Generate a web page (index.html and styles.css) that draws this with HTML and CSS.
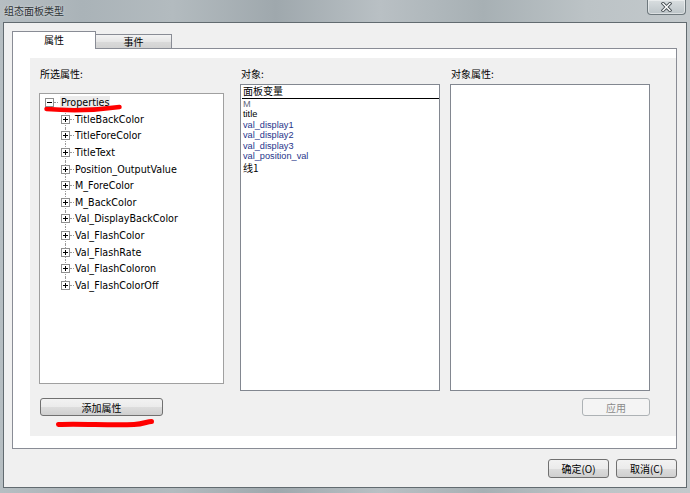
FILE: index.html
```html
<!DOCTYPE html>
<html>
<head>
<meta charset="utf-8">
<link rel="stylesheet" href="styles.css">
</head>
<body>
<div class="window">
  <div class="titlebar">
    <span class="title">组态面板类型</span>
    <div class="close">
      <svg width="11" height="10" viewBox="0 0 11 10">
        <path d="M2 1.5 L9 8.5 M9 1.5 L2 8.5" stroke="#4a5257" stroke-width="3.2" stroke-linecap="square" fill="none"/>
        <path d="M2 1.5 L9 8.5 M9 1.5 L2 8.5" stroke="#ffffff" stroke-width="1.4" stroke-linecap="square" fill="none"/>
      </svg>
    </div>
  </div>
  <div class="client">
    <div class="tabs">
      <div class="tab active">属性</div>
      <div class="tab">事件</div>
    </div>
    <div class="page">
      <div class="content">
        <div class="col col-props">
          <div class="label">所选属性:</div>
          <div class="tree">
            <div class="node root">
              <svg class="exp" width="9" height="9" viewBox="0 0 9 9"><rect x="0.5" y="0.5" width="8" height="8" fill="#fff" stroke="#8f8f8f"/><path d="M2 4.5 H7" stroke="#000"/></svg>
              <span class="conn"></span><span class="ntext sel">Properties</span>
            </div>
            <div class="children">
              <div class="node child"><svg class="exp" width="9" height="9" viewBox="0 0 9 9"><rect x="0.5" y="0.5" width="8" height="8" fill="#fff" stroke="#8f8f8f"/><path d="M2 4.5 H7 M4.5 2 V7" stroke="#000"/></svg><span class="conn"></span><span class="ntext">TitleBackColor</span></div>
              <div class="node child"><svg class="exp" width="9" height="9" viewBox="0 0 9 9"><rect x="0.5" y="0.5" width="8" height="8" fill="#fff" stroke="#8f8f8f"/><path d="M2 4.5 H7 M4.5 2 V7" stroke="#000"/></svg><span class="conn"></span><span class="ntext">TitleForeColor</span></div>
              <div class="node child"><svg class="exp" width="9" height="9" viewBox="0 0 9 9"><rect x="0.5" y="0.5" width="8" height="8" fill="#fff" stroke="#8f8f8f"/><path d="M2 4.5 H7 M4.5 2 V7" stroke="#000"/></svg><span class="conn"></span><span class="ntext">TitleText</span></div>
              <div class="node child"><svg class="exp" width="9" height="9" viewBox="0 0 9 9"><rect x="0.5" y="0.5" width="8" height="8" fill="#fff" stroke="#8f8f8f"/><path d="M2 4.5 H7 M4.5 2 V7" stroke="#000"/></svg><span class="conn"></span><span class="ntext">Position_OutputValue</span></div>
              <div class="node child"><svg class="exp" width="9" height="9" viewBox="0 0 9 9"><rect x="0.5" y="0.5" width="8" height="8" fill="#fff" stroke="#8f8f8f"/><path d="M2 4.5 H7 M4.5 2 V7" stroke="#000"/></svg><span class="conn"></span><span class="ntext">M_ForeColor</span></div>
              <div class="node child"><svg class="exp" width="9" height="9" viewBox="0 0 9 9"><rect x="0.5" y="0.5" width="8" height="8" fill="#fff" stroke="#8f8f8f"/><path d="M2 4.5 H7 M4.5 2 V7" stroke="#000"/></svg><span class="conn"></span><span class="ntext">M_BackColor</span></div>
              <div class="node child"><svg class="exp" width="9" height="9" viewBox="0 0 9 9"><rect x="0.5" y="0.5" width="8" height="8" fill="#fff" stroke="#8f8f8f"/><path d="M2 4.5 H7 M4.5 2 V7" stroke="#000"/></svg><span class="conn"></span><span class="ntext">Val_DisplayBackColor</span></div>
              <div class="node child"><svg class="exp" width="9" height="9" viewBox="0 0 9 9"><rect x="0.5" y="0.5" width="8" height="8" fill="#fff" stroke="#8f8f8f"/><path d="M2 4.5 H7 M4.5 2 V7" stroke="#000"/></svg><span class="conn"></span><span class="ntext">Val_FlashColor</span></div>
              <div class="node child"><svg class="exp" width="9" height="9" viewBox="0 0 9 9"><rect x="0.5" y="0.5" width="8" height="8" fill="#fff" stroke="#8f8f8f"/><path d="M2 4.5 H7 M4.5 2 V7" stroke="#000"/></svg><span class="conn"></span><span class="ntext">Val_FlashRate</span></div>
              <div class="node child"><svg class="exp" width="9" height="9" viewBox="0 0 9 9"><rect x="0.5" y="0.5" width="8" height="8" fill="#fff" stroke="#8f8f8f"/><path d="M2 4.5 H7 M4.5 2 V7" stroke="#000"/></svg><span class="conn"></span><span class="ntext">Val_FlashColoron</span></div>
              <div class="node child"><svg class="exp" width="9" height="9" viewBox="0 0 9 9"><rect x="0.5" y="0.5" width="8" height="8" fill="#fff" stroke="#8f8f8f"/><path d="M2 4.5 H7 M4.5 2 V7" stroke="#000"/></svg><span class="conn"></span><span class="ntext">Val_FlashColorOff</span></div>
            </div>
          </div>
          <button class="btn add">添加属性</button>
        </div>
        <div class="col col-obj">
          <div class="label">对象:</div>
          <div class="listbox">
            <div class="lhead">面板变量</div>
            <div class="item gray">M</div>
            <div class="item">title</div>
            <div class="item blue">val_display1</div>
            <div class="item blue">val_display2</div>
            <div class="item blue">val_display3</div>
            <div class="item blue">val_position_val</div>
            <div class="item cjk">线1</div>
          </div>
        </div>
        <div class="col col-attr">
          <div class="label">对象属性:</div>
          <div class="listbox"></div>
          <button class="btn apply">应用</button>
        </div>
      </div>
    </div>
    <div class="footer">
      <button class="btn foot">确定(O)</button>
      <button class="btn foot">取消(C)</button>
    </div>
  </div>
  <svg class="marks" width="690" height="493" viewBox="0 0 690 493">
    <path d="M46.5 109 C 65 110.5, 95 110.5, 119.5 107" stroke="#ff0000" stroke-width="4.5" stroke-linecap="round" fill="none"/>
    <path d="M58.5 424.5 C 80 423.5, 110 425.5, 134 424.5 C 144 424, 147 421.5, 151.5 421.5" stroke="#ff0000" stroke-width="5" stroke-linecap="round" fill="none"/>
  </svg>
</div>
</body>
</html>
```

FILE: styles.css
```css
* { box-sizing: border-box; }

body {
  margin: 0;
  width: 690px;
  height: 493px;
  overflow: hidden;
  font-family: "Liberation Sans", "Noto Sans CJK SC", sans-serif;
  background: #bfc6ca;
}

.window {
  position: relative;
  width: 690px;
  height: 493px;
  display: flex;
  flex-direction: column;
  background: linear-gradient(90deg, #b6bec2 0%, #aab3b8 12%, #b3bbbf 25%, #9fa8ad 40%, #b9c0c4 55%, #a7b0b4 70%, #bcc3c6 85%, #c3c9cc 100%);
}

.titlebar {
  height: 22px;
  flex: none;
  display: flex;
  align-items: flex-start;
}

.title {
  font-family: "Noto Sans CJK SC", sans-serif;
  font-size: 10px;
  line-height: 20px;
  color: #2e3336;
  padding-left: 4px;
  padding-top: 1px;
  text-shadow: 0 0 3px rgba(255,255,255,0.6);
}

.close {
  margin-left: auto;
  margin-right: 4px;
  width: 39px;
  height: 15px;
  border: 1px solid #6e787d;
  border-top: none;
  border-radius: 0 0 4px 4px;
  background: linear-gradient(#d9dee0, #bcc4c8);
  box-shadow: inset 0 0 0 1px rgba(255,255,255,0.45);
  display: flex;
  align-items: center;
  justify-content: center;
}

.client {
  flex: 1;
  margin: 0 3px 5px 3px;
  border: 1px solid #626b70;
  background: #f0f0f0;
  padding: 8px 9px 0 8px;
  display: flex;
  flex-direction: column;
}

.tabs {
  display: flex;
  align-items: flex-end;
  height: 17px;
}

.tab {
  font-family: "Noto Sans CJK SC", sans-serif;
  font-size: 10px;
  color: #000;
  text-align: center;
}

.tab.active {
  position: relative;
  z-index: 1;
  width: 84px;
  height: 18px;
  margin-bottom: -1px;
  background: #fff;
  border: 1px solid #898c95;
  border-bottom: none;
  line-height: 16px;
}

.tab:not(.active) {
  width: 76px;
  height: 14px;
  border: 1px solid #898c95;
  border-left: none;
  border-bottom: none;
  background: linear-gradient(#f3f3f3, #e6e6e6 50%, #dadada 51%, #d2d2d2);
  line-height: 13px;
}

.page {
  width: 665px;
  height: 401px;
  border: 1px solid #898c95;
  background: #fff;
  padding: 9px 0 12px 17px;
}

.content {
  height: 100%;
  background: #f0f0f0;
  padding: 9px 0 0 9px;
  display: flex;
  align-items: flex-start;
}

.col {
  display: flex;
  flex-direction: column;
  flex: none;
}

.col-props { width: 185px; }
.col-obj { width: 200px; margin-left: 16px; }
.col-attr { width: 200px; margin-left: 10px; }

.label {
  font-family: "Noto Sans CJK SC", sans-serif;
  font-size: 10px;
  line-height: 14px;
  height: 14px;
  color: #000;
  padding-left: 1px;
}

.tree {
  margin-top: 12px;
  height: 291px;
  border: 1px solid #a0a0a0;
  background: #fff;
  padding-left: 5px;
  padding-top: 0.5px;
  font-family: "DejaVu Sans", sans-serif;
  font-size: 9.6px;
  color: #000;
}

.node {
  height: 16.6px;
  display: flex;
  align-items: center;
  position: relative;
}

.exp { flex: none; display: block; position: relative; z-index: 1; }

.conn {
  width: 4px;
  height: 0;
  border-top: 1px dotted #9a9a9a;
  margin: 0 1px 0 0;
}

.ntext { white-space: nowrap; }

.sel {
  background: #ececec;
  padding: 1px 1px;
  margin-left: 1px;
}

.children {
  padding-left: 16px;
}

.child::before {
  content: "";
  position: absolute;
  left: 4px;
  top: 0;
  bottom: 0;
  border-left: 1px dotted #9a9a9a;
}

.child:last-child::before { bottom: 50%; }

.btn {
  font-family: "Noto Sans CJK SC", sans-serif;
  font-size: 10px;
  color: #000;
  border: 1px solid #707070;
  border-radius: 3px;
  background: linear-gradient(#f2f2f2 0%, #ebebeb 50%, #dddddd 51%, #cfcfcf 100%);
  padding: 0;
  line-height: 15px;
}

.add {
  margin-top: 14px;
  margin-left: 1px;
  width: 123px;
  height: 18px;
}

.listbox {
  margin-top: 3px;
  height: 307px;
  border: 1px solid #828790;
  background: #fff;
}

.lhead {
  font-family: "Noto Sans CJK SC", sans-serif;
  font-size: 10px;
  line-height: 12px;
  height: 13.5px;
  margin-left: 1px;
  padding-left: 1px;
  border-bottom: 1.5px solid #000;
  color: #000;
}

.item {
  font-family: "Liberation Sans", sans-serif;
  font-size: 9.2px;
  line-height: 10.6px;
  height: 10.6px;
  padding-left: 2px;
  color: #000;
  white-space: nowrap;
}

.item.gray { color: #5f6880; }
.item.blue { color: #26348a; }
.item.cjk { font-family: "Noto Sans CJK SC", sans-serif; font-size: 10px; line-height: 11px; }

.apply {
  margin-top: 7px;
  align-self: flex-end;
  width: 68px;
  height: 18px;
  border-color: #adb2b5;
  background: #f4f4f4;
  color: #8a8a8a;
}

.footer {
  margin-top: 10px;
  display: flex;
  justify-content: flex-end;
  gap: 7px;
}

.foot {
  width: 61px;
  height: 19px;
  line-height: 16px;
}

.marks {
  position: absolute;
  left: 0;
  top: 0;
  pointer-events: none;
}
```
